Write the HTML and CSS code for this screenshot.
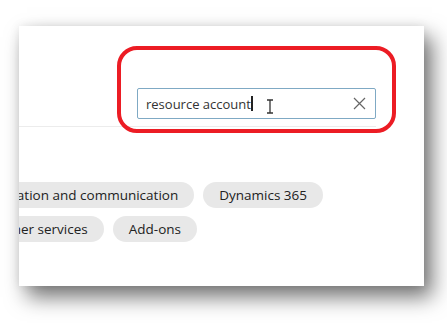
FILE: index.html
```html
<!DOCTYPE html>
<html lang="en">
<head>
    <meta charset="UTF-8">
    <meta name="viewport" content="width=device-width, initial-scale=1.0">
    <title>Search apps</title>
    <link rel="stylesheet" href="styles.css">
</head>
<body>
    <div class="shot">
        <div class="header">
            <div class="search-box">
                <span class="search-text">resource account</span><span class="caret"></span>
                <svg class="ibeam" width="8" height="15" viewBox="0 0 8 15">
                    <path d="M1 1h6M4 1v13M1 14h6" stroke="#333" stroke-width="1.3" fill="none"/>
                </svg>
                <svg class="clear" width="13" height="13" viewBox="0 0 13 13">
                    <path d="M1 1l11 11M12 1L1 12" stroke="#666" stroke-width="1.2" fill="none"/>
                </svg>
            </div>
        </div>

        <div class="chips">
            <div class="chip-row row-one">
                <span class="chip">Collaboration and communication</span>
                <span class="chip">Dynamics 365</span>
            </div>
            <div class="chip-row row-two">
                <span class="chip">Other services</span>
                <span class="chip">Add-ons</span>
            </div>
        </div>

        <div class="highlight"></div>
    </div>
</body>
</html>
```

FILE: styles.css
```css
* {
    margin: 0;
    padding: 0;
    box-sizing: border-box;
    font-family: "Open Sans", "Noto Sans", sans-serif;
}

body {
    background-color: white;
    height: 323px;
    overflow: hidden;
}

.shot {
    position: relative;
    margin: 26px 0 0 19px;
    width: 405px;
    height: 260px;
    background-color: white;
    overflow: hidden;
    box-shadow: 8px 11px 20px rgba(0,0,0,0.55), 0 0 10px rgba(0,0,0,0.08);
}

.header {
    height: 101px;
    margin-right: 48px;
    padding-top: 62px;
    border-bottom: 1px solid #ececec;
    display: flex;
    justify-content: flex-end;
}

.search-box {
    position: relative;
    width: 239px;
    height: 31px;
    border: 1px solid #7fa9c4;
    border-radius: 2px;
    display: flex;
    align-items: center;
    padding-left: 8px;
}

.search-text {
    font-size: 13px;
    color: #333;
}

.caret {
    width: 2px;
    height: 15px;
    background-color: #222;
}

.ibeam {
    position: absolute;
    left: 128px;
    top: 10px;
}

.clear {
    position: absolute;
    right: 9px;
    top: 8px;
}

.chips {
    padding-top: 55px;
    display: flex;
    flex-direction: column;
    gap: 8px;
}

.chip-row {
    display: flex;
    justify-content: flex-end;
    gap: 9px;
}

.row-one {
    width: 304px;
}

.row-two {
    width: 178px;
}

.chip {
    flex-shrink: 0;
    height: 26px;
    padding: 0 16px;
    border-radius: 13px;
    background-color: #e8e8e8;
    color: #222;
    font-size: 13.5px;
    line-height: 26px;
    white-space: nowrap;
}

.highlight {
    position: absolute;
    left: 98px;
    top: 20px;
    width: 279px;
    height: 87px;
    border: 4px solid #ec1c24;
    border-radius: 20px;
}
```
